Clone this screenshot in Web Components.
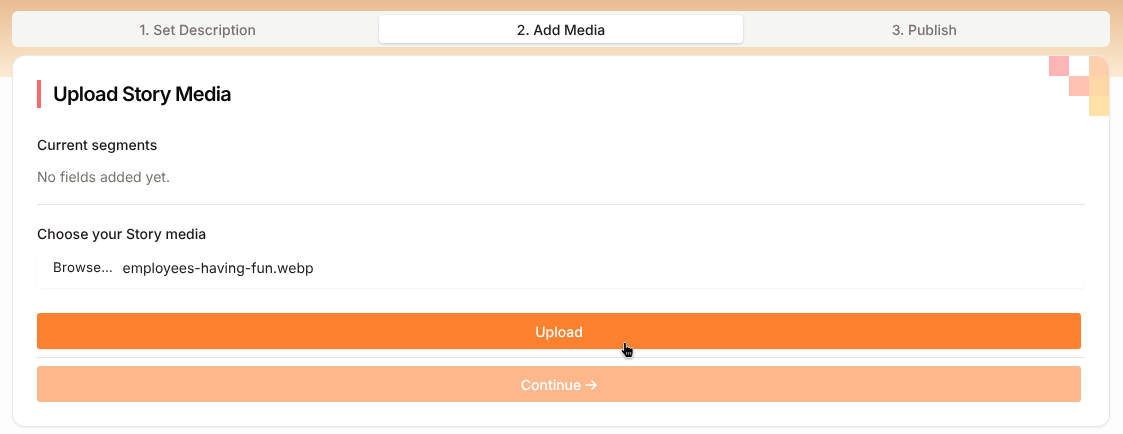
<!DOCTYPE html>
<html>
<head>
<meta charset="utf-8">
<title>Upload Story Media</title>
<style>
  html, body { margin: 0; height: 100%; }
  body {
    background: #fdfdfd linear-gradient(180deg, #e8bc92 0%, #fdecd3 100%) no-repeat;
    background-size: 100% 77px;
    font-family: Inter, "Liberation Sans", sans-serif;
    text-rendering: geometricPrecision;
    overflow: hidden;
  }
</style>
</head>
<body>
<story-page>
  <step-tabs>
    <step-tab>1. Set Description</step-tab>
    <step-tab active>2. Add Media</step-tab>
    <step-tab>3. Publish</step-tab>
  </step-tabs>
  <story-card>
    <card-title>Upload Story Media</card-title>
    <form-field label="Current segments" class="first"><span class="none">No fields added yet.</span></form-field>
    <h-rule></h-rule>
    <form-field label="Choose your Story media"><file-picker name="employees-having-fun.webp"></file-picker></form-field>
    <action-button>Upload<hand-cursor></hand-cursor></action-button>
    <h-rule thin></h-rule>
    <action-button disabled>Continue <arrow-icon></arrow-icon></action-button>
  </story-card>
</story-page>

<script>
function define(tag, css, html) {
  customElements.define(tag, class extends HTMLElement {
    constructor() {
      super();
      this.attachShadow({ mode: "open" });
    }
    connectedCallback() {
      const out = typeof html === "function" ? html(this) : html;
      this.shadowRoot.innerHTML = `<style>${css}</style>${out}`;
    }
  });
}

define("story-page", `
  :host {
    display: flex; flex-direction: column; gap: 9px; padding: 11px 13px 0 12px;
    will-change: transform; /* grayscale text, as in the reference */
  }
`, `<slot></slot>`);

define("step-tabs", `
  :host {
    display: grid; grid-template-columns: repeat(3, 1fr); gap: 0;
    height: 36px; box-sizing: border-box; padding: 4px;
    background: #f5f5f4; border-radius: 6px;
  }
`, `<slot></slot>`);

define("step-tab", `
  :host {
    display: flex; align-items: center; justify-content: center;
    padding-top: 2px; box-sizing: border-box;
    font-size: 14px; font-weight: 500; color: #78716c; border-radius: 4px;
  }
  :host([active]) {
    background: #fff; color: #1c1917;
    box-shadow: 0 1px 3px rgba(0,0,0,.12), 0 1px 2px rgba(0,0,0,.06);
  }
`, `<slot></slot>`);

define("story-card", `
  :host {
    display: flex; flex-direction: column; position: relative;
    height: 370px; box-sizing: border-box; margin: 0 1px;
    padding: 24px;
    background: #fff; border-radius: 12px; overflow: hidden;
    box-shadow: 0 0 0 1px #ebe9e7, 0 1px 3px rgba(0,0,0,.15);
  }
  .pix { position: absolute; width: 20px; height: 20px; }
`, `
  <div class="pix" style="right:40px;top:0;background:#ffb5b5"></div>
  <div class="pix" style="right:0;top:0;background:#ffcfae"></div>
  <div class="pix" style="right:20px;top:20px;background:#ffc2b2"></div>
  <div class="pix" style="right:0;top:20px;background:#ffd6a5"></div>
  <div class="pix" style="right:0;top:40px;background:#ffe2a6"></div>
  <slot></slot>`);

define("card-title", `
  :host {
    display: block; height: 28px; line-height: 28px;
    border-left: 4px solid #ff6b6b; padding-left: 12px;
    font-size: 20px; font-weight: 600; letter-spacing: -.68px; color: #0c0a09;
  }
`, `<slot></slot>`);

define("form-field", `
  :host { display: block; padding-top: 20px; }
  :host(.first) { padding-top: 28px; }
  label { display: block; font-size: 14px; font-weight: 500; line-height: 20px; color: #1c1917; }
  ::slotted(.none) { display: block; margin-top: 12px; font-size: 14px; line-height: 20px; color: #78716c; }
`, el => `<label>${el.getAttribute("label")}</label><slot></slot>`);

define("h-rule", `
  :host { display: block; height: 1px; background: #e7e5e4; margin-top: 16px; flex: none; }
  :host([thin]) { margin-top: 8px; margin-bottom: 8px; }
`, ``);

define("file-picker", `
  :host {
    display: flex; align-items: center; height: 40px; box-sizing: border-box;
    margin-top: 3px; margin-bottom: 25px; padding: 0 16px;
    border-radius: 4px; box-shadow: 0 1px 2px rgba(0,0,0,.05);
    font-size: 14px; color: #1c1917;
  }
  .btn { font-size: 13.333px; letter-spacing: .22px; margin-right: 9.500px; }
`, el => `<span class="btn">Browse…</span><span>${el.getAttribute("name")}</span>`);

define("action-button", `
  :host {
    display: flex; align-items: center; justify-content: center; position: relative;
    gap: 4px; height: 36px; box-sizing: border-box; padding-top: 2px;
    margin-right: 4px; flex: none; border-radius: 3px;
    background: #fe8130; color: #fff; font-size: 14px; font-weight: 500;
    box-shadow: 0 1px 2px rgba(0,0,0,.08);
  }
  :host([disabled]) { background: #feb88b; color: #fff; box-shadow: none; }
`, `<slot></slot>`);

define("arrow-icon", `
  :host { display: block; width: 12px; height: 12px; line-height: 0; }
`, `<svg width="12" height="12" viewBox="0 0 12 12" fill="none" stroke="currentColor" stroke-width="1.5">
  <path d="M.5 6h10.500M6.500 1.500 11 6l-4.500 4.500"/>
</svg>`);

define("hand-cursor", `
  :host { position: absolute; left: 584px; top: 29px; width: 13px; height: 16px; line-height: 0; }
  svg { overflow: visible; filter: drop-shadow(0 1px 1px rgba(0,0,0,.4)); }
`, `<svg width="13" height="16" viewBox="0 0 13 16">
  <path d="M2.600 1.400c0-1.500 2.700-1.500 2.700 0V5.500c.1-1.100 2.200-1.100 2.300 0v.5c.2-1 2-1 2.100 0v.5c.3-.9 2.300-.8 2.300.4v4.100c0 1.300-.6 2-.9 3v1.500H4.200v-1.500L.5 9.500c-.9-1.300.8-2.500 1.700-1.400l.4.500Z" fill="#000" stroke="#fff" stroke-width=".8"/>
  <path d="M5.700 10v2.800M7.700 10v2.800M9.700 10v2.800" stroke="#fff" stroke-width=".7"/>
</svg>`);
</script>
</body>
</html>
